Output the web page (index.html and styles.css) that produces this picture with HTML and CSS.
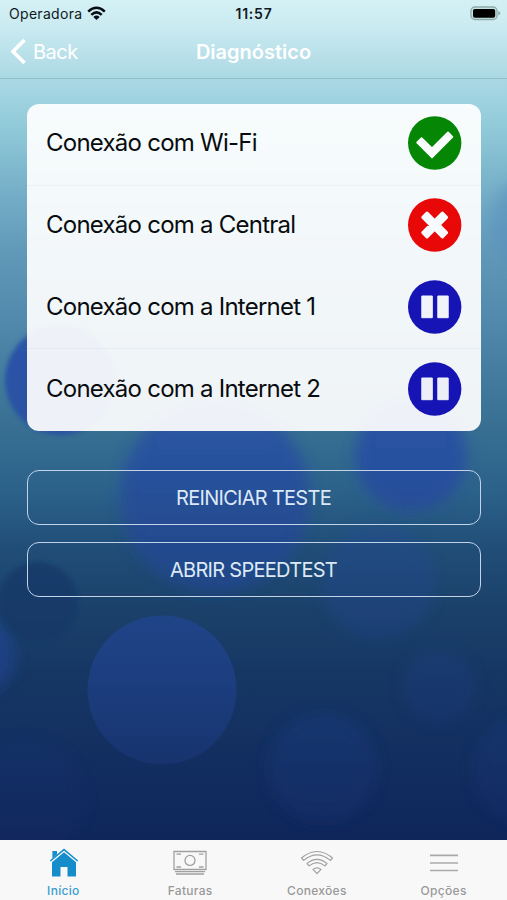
FILE: index.html
```html
<!DOCTYPE html>
<html lang="pt-BR">
<head>
<meta charset="utf-8">
<meta name="viewport" content="width=device-width, initial-scale=1">
<title>Diagnóstico</title>
<link rel="stylesheet" href="styles.css">
</head>
<body>
<div class="screen">
  <svg class="backdrop" viewBox="0 0 507 840" aria-hidden="true">
    <defs>
      <linearGradient id="bubble" x1="0" y1="300" x2="0" y2="840" gradientUnits="userSpaceOnUse">
        <stop offset="0" stop-color="#2c55ac"/><stop offset=".3" stop-color="#28519f"/><stop offset=".45" stop-color="#244a90"/><stop offset=".65" stop-color="#1e4184"/><stop offset=".85" stop-color="#17346f"/><stop offset="1" stop-color="#122b66"/>
      </linearGradient>
      <filter id="soft" x="-40%" y="-40%" width="180%" height="180%"><feGaussianBlur stdDeviation="7"/></filter>
      <filter id="edge" x="-10%" y="-10%" width="120%" height="120%"><feGaussianBlur stdDeviation="2"/></filter>
    </defs>
    <g fill="url(#bubble)">
      <circle cx="60" cy="380" r="55" filter="url(#edge)"/>
      <circle cx="215" cy="497" r="95" filter="url(#soft)" opacity=".92"/>
      <circle cx="411" cy="456" r="56" filter="url(#soft)"/>
      <circle cx="378" cy="582" r="57" filter="url(#soft)" opacity=".45"/>
      <circle cx="-28" cy="656" r="43" filter="url(#soft)"/>
      <circle cx="162" cy="690" r="74.500"/>
      <circle cx="323" cy="768" r="54" filter="url(#soft)" opacity=".7"/>
      <circle cx="439" cy="687" r="37" filter="url(#soft)" opacity=".35"/>
      <circle cx="526" cy="770" r="53" filter="url(#soft)" opacity=".5"/>
      <circle cx="25" cy="800" r="60" filter="url(#soft)" opacity=".3"/>
    </g>
    <circle cx="38" cy="602" r="39.500" fill="#163967" opacity=".75" filter="url(#edge)"/>
    <circle cx="544" cy="224" r="54" fill="#5690bd" opacity=".55" filter="url(#soft)"/>
  </svg>

  <header class="statusbar">
    <div class="carrier">
      <span class="carrier-name">Operadora</span>
      <svg width="19" height="15" viewBox="0 0 19 15" fill="none" stroke="#060e13" stroke-width="2.500">
        <path d="M1.200 5.600Q9.500-2 17.800 5.600"/><path d="M4.300 8.800Q9.500 4 14.700 8.800"/><path d="M9.500 14L6.300 11Q9.500 8.200 12.700 11Z" fill="#060e13" stroke="none"/>
      </svg>
    </div>
    <span class="clock">11:57</span>
    <svg class="battery" width="31" height="15" viewBox="0 0 31 15">
      <rect x="1" y="1" width="26" height="12.500" rx="3.800" fill="#c4e4e3" stroke="#8fabab" stroke-width="1.300"/><rect x="3" y="3" width="22.200" height="8.700" rx="1.800" fill="#000"/><path d="M28.300 5V9.600Q30.200 8.700 30.200 7.300T28.300 5Z" fill="#8fabab"/>
    </svg>
  </header>

  <nav class="navbar">
    <a class="back"><svg width="17" height="27" viewBox="0 0 17 27" fill="none" stroke="#fff" stroke-width="3.600"><path d="M14.500 2L3 13.500L14.500 25"/></svg><span class="back-text">Back</span></a>
    <h1 class="title">Diagnóstico</h1>
  </nav>

  <main class="content">
    <ul class="checks">
      <li class="check line"><span class="label">Conexão com Wi-Fi</span>
        <svg width="54" height="54" viewBox="0 0 54 54"><circle cx="26.700" cy="27" r="26.700" fill="#058605"/><path d="M9.200 26.500L13.600 22.100L24 32.500L40 16.500L44.400 20.900L24 41.300Z" fill="#fbfdfd" stroke="#fbfdfd" stroke-width="1.800" stroke-linejoin="round"/></svg></li>
      <li class="check"><span class="label">Conexão com a Central</span>
        <svg width="54" height="54" viewBox="0 0 54 54"><circle cx="26.700" cy="27" r="26.700" fill="#e90808"/><path d="M19 15.200L26.700 22.900L34.400 15.200L38.500 19.300L30.800 27L38.500 34.700L34.400 38.800L26.700 31.100L19 38.800L14.900 34.700L22.600 27L14.900 19.300Z" fill="#f8fbfd" stroke="#f8fbfd" stroke-width="3.200" stroke-linejoin="round"/></svg></li>
      <li class="check line"><span class="label">Conexão com a Internet 1</span>
        <svg width="54" height="54" viewBox="0 0 54 54"><circle cx="26.700" cy="27" r="26.700" fill="#1714b5"/><path d="M13.800 16H24.300V37.700H13.800ZM29.800 16H40.200V37.700H29.800Z" fill="#f0f3f9" stroke="#f0f3f9" stroke-linejoin="round"/></svg></li>
      <li class="check"><span class="label">Conexão com a Internet 2</span>
        <svg width="54" height="54" viewBox="0 0 54 54"><circle cx="26.700" cy="27" r="26.700" fill="#1714b5"/><path d="M13.800 16H24.300V37.700H13.800ZM29.800 16H40.200V37.700H29.800Z" fill="#eceff7" stroke="#eceff7" stroke-linejoin="round"/></svg></li>
    </ul>
    <div class="actions">
      <button class="action">REINICIAR TESTE</button>
      <button class="action">ABRIR SPEEDTEST</button>
    </div>
  </main>

  <footer class="tabbar">
    <a class="tab active"><svg width="34" height="30" viewBox="-1 0 34 30" fill="#148dca"><path d="M5.400 3H10V6.500L5.400 10.500Z"/><path d="M3.300 13L17 1.600L30.700 13" fill="none" stroke="#148dca" stroke-width="1.500"/><path d="M17 4.300L29 14.300V28.500H20.500V19H13.500V28.500H5V14.300Z"/></svg><span>Início</span></a>
    <a class="tab"><svg width="34" height="30" viewBox="0 0 34 30" fill="none" stroke="#a0a0a0" stroke-width="1.300"><path d="M1 3.500H33V21.500H1Z"/><circle cx="17" cy="12.400" r="5"/><path d="M3.500 6.200H8M26 6.200H30.500M3.500 19H8M26 19H30.500M2 23.700H32M3 26H31"/></svg><span>Faturas</span></a>
    <a class="tab"><svg width="34" height="30" viewBox="0 0 34 30" fill="none" stroke="#a0a0a0" stroke-width="1.200" stroke-linejoin="round"><path d="M1.500 10Q17-3 32.500 10L30.300 12.400Q17 1.200 3.700 12.400Z"/><path d="M7 15.500Q17 7.200 27 15.500L24.800 17.900Q17 11.200 9.200 17.900Z"/><path d="M13 21.400Q17 18.200 21 21.400L17 25.600Z"/></svg><span>Conexões</span></a>
    <a class="tab"><svg width="34" height="30" viewBox="0 0 34 30" stroke="#aaa" stroke-width="1.700"><path d="M3 7.400H31M3 15H31M3 22.500H31"/></svg><span>Opções</span></a>
  </footer>
</div>
</body>
</html>
```

FILE: styles.css
```css
* { box-sizing: border-box; }
body { margin: 0; font-family: Inter, "Liberation Sans", sans-serif; }
.screen {
  position: relative;
  isolation: isolate;
  width: 507px;
  height: 900px;
  overflow: hidden;
  display: flex;
  flex-direction: column;
  background: linear-gradient(#d4f1f5 0, #cbebf1 25px, #b0dbe6 70px, #a4d5e2 90px, #8fc9d8 130px, #76afc8 190px, #6199b9 250px, #4e87aa 330px, #376e92 430px, #2c628a 490px, #204d77 550px, #1b416a 610px, #163764 670px, #122e60 760px, #0f265a 840px);
}
.backdrop { position: absolute; z-index: -1; top: 0; left: 0; width: 507px; height: 840px; }
.statusbar {
  display: grid;
  grid-template-columns: 1fr auto 1fr;
  align-items: center;
  height: 27px;
  padding: 0 6px 0 9px;
  color: #10191e;
}
.carrier { display: flex; align-items: center; gap: 5px; font-size: 14px; letter-spacing: .3px; }
.clock { margin-right: 2px; font-size: 14px; font-weight: 600; letter-spacing: .8px; }
.battery { justify-self: end; }
.navbar {
  display: grid;
  grid-template-columns: 1fr auto 1fr;
  align-items: center;
  height: 52px;
  padding: 0 10px 2px;
  border-bottom: 1px solid #91bdc9;
  color: #fff;
}
.back { display: flex; align-items: center; gap: 6px; font-size: 20px; letter-spacing: -.5px; }
.title { margin: 0; font-size: 20px; font-weight: 600; }
.content { flex: 1; padding: 25px 26px 0 27px; }
.checks {
  list-style: none;
  margin: 0;
  padding: 0;
  height: 327px;
  border-radius: 12px;
  background: rgba(255, 255, 255, .92);
  overflow: hidden;
}
.check {
  display: flex;
  align-items: center;
  justify-content: space-between;
  height: 81.75px;
  padding: 0 19px 3px 19px;
  font-size: 24px;
  letter-spacing: -.76px;
  color: #080c0e;
}
.line { box-shadow: inset 0 -1px rgba(70, 100, 130, .05); }
.label { white-space: nowrap; padding-bottom: 1px; }
.actions { display: flex; flex-direction: column; gap: 17px; margin-top: 39px; }
.action {
  height: 55px;
  padding: 0 1px 0 0;
  border: 1px solid #c3d3e8;
  border-radius: 12px;
  background: transparent;
  font: 400 20px Inter, "Liberation Sans", sans-serif;
  letter-spacing: -.72px;
  color: #dce9f6;
}
.tabbar {
  display: grid;
  grid-template-columns: repeat(4, 1fr);
  height: 60px;
  background: #f8f8f8;
}
.tab {
  display: flex;
  flex-direction: column;
  align-items: center;
  padding-top: 8px;
  font-size: 12px;
  font-weight: 500;
  line-height: 15px;
  letter-spacing: .3px;
  color: #999;
}
.tab span { margin-top: 5px; }
.active { color: #3a9dd0; }
```
